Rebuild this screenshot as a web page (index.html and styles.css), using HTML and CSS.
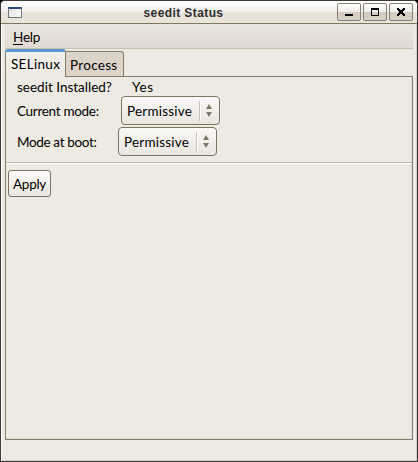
FILE: index.html
```html
<!DOCTYPE html>
<html lang="en">
<head>
<meta charset="utf-8">
<title>seedit Status</title>
<link rel="stylesheet" href="styles.css">
</head>
<body>
<div class="window">
  <header class="titlebar">
    <span class="app-icon"></span>
    <h1 class="title">seedit Status</h1>
    <div class="controls">
      <button class="control" aria-label="Minimize"><svg width="22" height="16" shape-rendering="crispEdges"><path d="M7 10h8v2H7z"/></svg></button>
      <button class="control" aria-label="Maximize"><svg width="22" height="16" shape-rendering="crispEdges"><path fill-rule="evenodd" d="M7 4h8v8H7zM8 6v5h6V6z"/></svg></button>
      <button class="control" aria-label="Close"><svg width="22" height="16" shape-rendering="crispEdges"><path d="M7 4h2v1h1v1h2V5h1V4h2v2h-1v1h-1v2h1v1h1v2h-2v-1h-1v-1h-2v1H9v1H7v-2h1V9h1V7H8V6H7z"/></svg></button>
    </div>
  </header>
  <div class="client">
    <nav class="menubar"><span class="menu"><u>H</u>elp</span></nav>
    <div class="tabs">
      <div class="tab active">SELinux</div>
      <div class="tab">Process</div>
    </div>
    <main class="pane">
      <div class="row info"><span class="label installed">seedit Installed?</span><span class="yes">Yes</span></div>
      <div class="row"><span class="label current">Current mode:</span>
        <div class="combo"><span class="value">Permissive</span><svg class="arrows" width="8" height="13"><path d="M1 5L4 0l3 5zM1 8h6l-3 5z"/></svg></div></div>
      <div class="row"><span class="label boot">Mode at boot:</span>
        <div class="combo"><span class="value">Permissive</span><svg class="arrows" width="8" height="13"><path d="M1 5L4 0l3 5zM1 8h6l-3 5z"/></svg></div></div>
      <hr class="separator">
      <button class="apply">Apply</button>
    </main>
  </div>
</div>
</body>
</html>
```
FILE: styles.css
```css
* { box-sizing: border-box; }
body {
  margin: 0;
  background: #000;
  font: 13.5px/18px Lato, "Noto Sans", sans-serif;
  color: #000;
}
button { font: inherit; color: inherit; }
.window {
  width: 418px;
  height: 462px;
  border: 1px solid #3c3836;
  border-radius: 5px 5px 0 0;
  background: #edeae3;
  box-shadow: inset 1px 0 #fff, inset -1px -1px #d3cac0;
  overflow: hidden;
}
.titlebar {
  display: flex;
  align-items: center;
  height: 23px;
  padding: 0 4px 0 7px;
  border-bottom: 1px solid #7f785f;
  background: linear-gradient(#fff, #f1efeb 11px, #e5e1d8 12px, #e9e5dc);
}
.app-icon {
  width: 14px;
  height: 11px;
  border: 1px solid #777;
  border-top: 2px solid #2c4d80;
  background: linear-gradient(135deg, #e2e2e2, #fafafa);
}
.title {
  flex: 1;
  margin: 2px 0 0 -1px;
  padding-left: 9px;
  text-align: center;
  font: bold 12px/18px "Liberation Sans", sans-serif;
  letter-spacing: .4px;
  color: #302e2c;
}
.controls { display: flex; gap: 2px; }
.control {
  display: flex;
  width: 24px;
  height: 18px;
  padding: 0;
  border: 1px solid #858078;
  border-radius: 2px;
  background: linear-gradient(#fff, #efece8 8px, #d5cac0 8px, #d9d0c7);
}
.client { padding: 0 4px; }
.menubar {
  height: 25px;
  padding: 4px 8px;
  border-bottom: 1px solid #cdbfad;
  background: linear-gradient(#ebe6e0, #e1dad3);
}
.menu { letter-spacing: -.2px; }
.menu u { text-underline-offset: 2px; }
.tabs { display: flex; align-items: flex-end; height: 28px; }
.tab {
  height: 25px;
  width: 58px;
  margin-bottom: 1px;
  padding: 4px 0 0 4px;
  border: 1px solid #857c6c;
  border-left: 0;
  border-bottom: 0;
  border-radius: 0 3px 0 0;
  background: #dcd3c9;
  letter-spacing: .3px;
}
.tab.active {
  position: relative;
  width: 61px;
  height: 28px;
  margin-bottom: 0;
  padding: 3px 0 0 5px;
  border: 1px solid #857c6c;
  border-top: 3px solid #5a98d4;
  border-bottom: 0;
  border-radius: 3px 3px 0 0;
  background: linear-gradient(#f2f0eb, #edeae3);
}
.pane {
  height: 364px;
  margin-top: -1px;
  padding-top: 1px;
  border: 1px solid #857c6c;
  box-shadow: inset -1px -1px #e1dad3;
}
.row { display: flex; align-items: center; height: 31px; padding-left: 11px; }
.info { height: 17px; }
.label { white-space: nowrap; flex: none; }
.installed { width: 115px; }
.current { width: 104px; letter-spacing: -.3px; }
.boot { width: 101px; letter-spacing: -.35px; }
.yes { letter-spacing: .6px; }
.combo {
  display: flex;
  align-items: center;
  width: 99px;
  height: 29px;
  padding-left: 5px;
  border: 1px solid #7f7462;
  border-radius: 4px;
  background: linear-gradient(#faf9f7, #e9e5df);
}
.value {
  width: 73px;
  height: 20px;
  line-height: 20px;
  letter-spacing: .2px;
  border-right: 1px solid #c8c0b5;
  box-shadow: 1px 0 #fff;
}
.arrows { margin-left: 5px; fill: #80776a; }
.separator {
  height: 2px;
  margin: 5px 0 6px;
  border: 0;
  border-top: 1px solid #bbb4aa;
  border-bottom: 1px solid #fff;
}
.apply {
  display: block;
  width: 43px;
  height: 27px;
  margin-left: 2px;
  padding: 0;
  border: 1px solid #80705f;
  border-radius: 3px;
  background: linear-gradient(#fcfbfa, #e9e5df);
  letter-spacing: -.3px;
}
```
